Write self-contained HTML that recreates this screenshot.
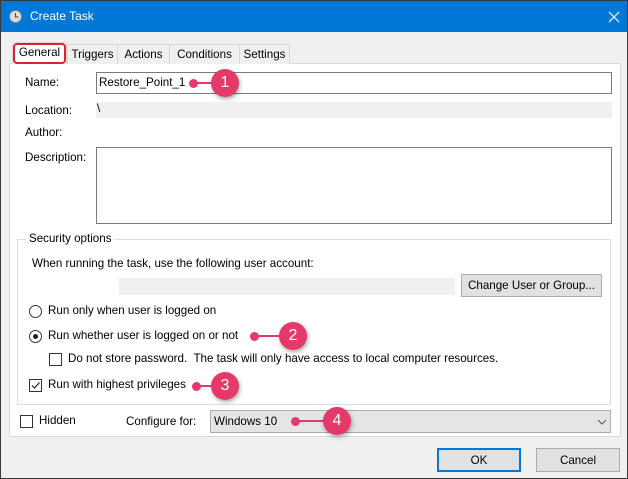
<!DOCTYPE html>
<html><head><style>
*{box-sizing:border-box}
body{margin:0;width:628px;height:479px;overflow:hidden;font-family:"Liberation Sans",sans-serif;font-size:11.6px;color:#000;background:#fff}
.win{position:absolute;left:0;top:0;width:628px;height:479px;background:#f0f0f0;border:1px solid #3a3a3a}
.title{position:absolute;left:0;top:0;width:626px;height:31px;background:#0078d7;color:#fff;font-size:12px}
.a{position:absolute;white-space:nowrap}
.panel{position:absolute;left:8px;top:62px;width:612px;height:374px;background:#fff;border:1px solid #d9d9d9}
.tab{position:absolute;top:43px;height:20px;border:1px solid #d9d9d9;border-bottom:none;background:#f0f0f0;padding:3px 0 0;text-align:center}
.inp{position:absolute;background:#fff;border:1px solid #7a7a7a}
.gray{position:absolute;background:#f0f0f0}
.btn{position:absolute;background:#e1e1e1;border:1px solid #adadad;text-align:center}
.cb{position:absolute;width:13px;height:13px;border:1px solid #333;background:#fff}
.rd{position:absolute;width:13px;height:13px;border:1px solid #333;border-radius:50%;background:#fff}
.num{position:absolute;width:28px;height:28px;border-radius:50%;background:#e5396a;color:#fff;font-size:16px;text-align:center;line-height:28px;box-shadow:1px 2px 4px rgba(0,0,0,.35)}
.dot{position:absolute;width:9px;height:9px;border-radius:50%;background:#e5396a}
.ln{position:absolute;height:2px;background:#e5396a}
</style></head><body>
<div class="win">
<div class="title">
<svg class="a" style="left:8px;top:9px" width="13" height="13"><circle cx="6.5" cy="6.5" r="6" fill="#ddd" stroke="#888"/><path d="M6.5 3v4h3" stroke="#444" fill="none"/></svg>
<span class="a" style="left:29px;top:8px">Create Task</span>
<svg class="a" style="left:606px;top:9px" width="14" height="14"><path d="M2 2l10 10M12 2L2 12" stroke="#fff" stroke-width="1.2"/></svg>
</div>
<div class="panel"></div>
<div class="tab" style="left:66px;width:51px">Triggers</div>
<div class="tab" style="left:116px;width:53px">Actions</div>
<div class="tab" style="left:168px;width:71px">Conditions</div>
<div class="tab" style="left:238px;width:51px">Settings</div>
<div class="tab" style="left:11px;width:55px;top:41px;height:22px;background:#fff">General</div>
<div class="a" style="left:12px;top:42px;width:53px;height:21px;border:2px solid #e0202a;border-radius:4px"></div>

<span class="a" style="left:24px;top:75px">Name:</span>
<div class="inp" style="left:95px;top:71px;width:516px;height:22px"></div>
<span class="a" style="left:98px;top:75px">Restore_Point_1</span>
<span class="a" style="left:24px;top:103px">Location:</span>
<div class="gray" style="left:95px;top:101px;width:516px;height:16px"></div>
<span class="a" style="left:96px;top:101px">\</span>
<span class="a" style="left:24px;top:125px">Author:</span>
<span class="a" style="left:24px;top:150px">Description:</span>
<div class="inp" style="left:95px;top:146px;width:516px;height:77px"></div>

<div class="a" style="left:16px;top:238px;width:594px;height:166px;border:1px solid #dcdcdc"></div>
<span class="a" style="left:25px;top:231px;background:#fff;padding:0 3px">Security options</span>
<span class="a" style="left:31px;top:256px">When running the task, use the following user account:</span>
<div class="gray" style="left:118px;top:277px;width:336px;height:17px"></div>
<div class="btn" style="left:460px;top:273px;width:141px;height:23px;padding-top:4px">Change User or Group...</div>
<div class="rd" style="left:28px;top:304px"></div>
<span class="a" style="left:47px;top:303px">Run only when user is logged on</span>
<div class="rd" style="left:28px;top:329px"></div>
<div class="a" style="left:32px;top:333px;width:5px;height:5px;border-radius:50%;background:#222"></div>
<span class="a" style="left:47px;top:328px">Run whether user is logged on or not</span>
<div class="cb" style="left:48px;top:352px"></div>
<span class="a" style="left:67px;top:351px">Do not store password.&nbsp; The task will only have access to local computer resources.</span>
<div class="cb" style="left:28px;top:378px"></div>
<svg class="a" style="left:29px;top:379px" width="11" height="11"><path d="M2 5.5l2.5 2.5 5-5.5" stroke="#222" fill="none" stroke-width="1.2"/></svg>
<span class="a" style="left:47px;top:377px">Run with highest privileges</span>

<div class="cb" style="left:19px;top:414px"></div>
<span class="a" style="left:38px;top:413px">Hidden</span>
<span class="a" style="left:125px;top:414px">Configure for:</span>
<div class="a" style="left:209px;top:409px;width:401px;height:23px;background:#e5e5e5;border:1px solid #adadad"></div>
<span class="a" style="left:213px;top:414px">Windows 10</span>
<svg class="a" style="left:596px;top:417px" width="10" height="8"><path d="M1 2l4 4 4-4" stroke="#555" fill="none"/></svg>

<div class="btn" style="left:436px;top:447px;width:84px;height:24px;border:2px solid #0078d7;padding-top:4px">OK</div>
<div class="btn" style="left:535px;top:447px;width:84px;height:24px;padding-top:5px">Cancel</div>

<div class="dot" style="left:188px;top:78px"></div><div class="ln" style="left:192px;top:81px;width:20px"></div><div class="num" style="left:210px;top:68px">1</div>
<div class="dot" style="left:249px;top:331px"></div><div class="ln" style="left:253px;top:334px;width:26px"></div><div class="num" style="left:278px;top:321px">2</div>
<div class="dot" style="left:191px;top:381px"></div><div class="ln" style="left:195px;top:384px;width:17px"></div><div class="num" style="left:210px;top:371px">3</div>
<div class="dot" style="left:290px;top:416px"></div><div class="ln" style="left:294px;top:419px;width:30px"></div><div class="num" style="left:322px;top:406px">4</div>
</div>
</body></html>
